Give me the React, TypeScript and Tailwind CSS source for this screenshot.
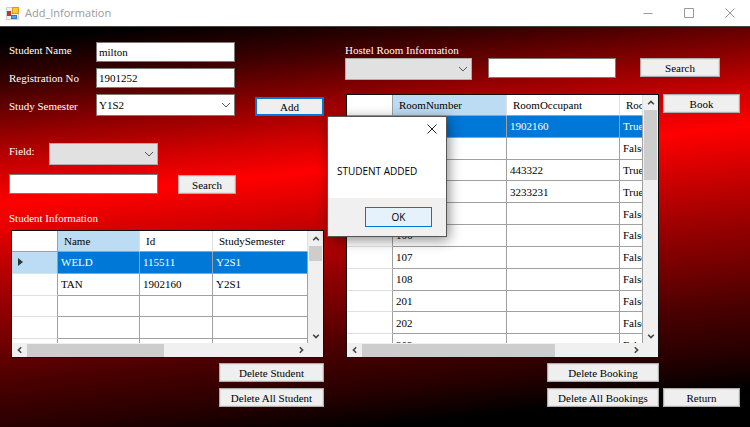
import type { ReactNode } from "react";

const serif = "font-['Liberation_Serif','Times_New_Roman',serif]";
const sans = "font-['Open_Sans','Noto_Sans',sans-serif]";

function Chevron({ dir, className = "" }: { dir: "up" | "down" | "left" | "right"; className?: string }) {
  const d = {
    up: "M1.5 6.5 5 3l3.5 3.5",
    down: "M1.5 3.5 5 7l3.5-3.5",
    left: "M6.5 1.5 3 5l3.5 3.5",
    right: "M3.5 1.5 7 5 3.5 8.5",
  }[dir];
  return (
    <svg viewBox="0 0 10 10" className={`size-2 shrink-0 ${className}`} fill="none" stroke="currentColor" strokeWidth="2" aria-hidden="true">
      <path d={d} />
    </svg>
  );
}

function Button({ children, className = "", primary = false }: { children: ReactNode; className?: string; primary?: boolean }) {
  return (
    <button
      type="button"
      className={`flex h-[19px] items-center justify-center border bg-[#efefef] text-black ring-1 ring-inset ${primary ? "border-[#0078d7] ring-[#0078d7]" : "border-[#adadad] ring-[#e1e1e1]"} ${className}`}
    >
      {children}
    </button>
  );
}

function TextBox({ id, value, label, className = "" }: { id: string; value?: string; label?: string; className?: string }) {
  return (
    <input
      id={id}
      type="text"
      defaultValue={value}
      aria-label={label}
      className={`h-5 min-w-0 border border-[#7a7a7a] bg-white px-0.5 text-black ${className}`}
    />
  );
}

function Combo({ id, value = "", label, className = "" }: { id: string; value?: string; label?: string; className?: string }) {
  return (
    <div className={`relative flex ${className}`}>
      <select
        id={id}
        aria-label={label}
        defaultValue={value}
        className={`h-[22px] w-full appearance-none border px-0.5 text-black ${value ? "border-[#7a7a7a] bg-white" : "border-[#adadad] bg-[#e1e1e1]"}`}
      >
        <option value={value}>{value}</option>
      </select>
      <svg viewBox="0 0 10 6" className="pointer-events-none absolute top-2 right-1 h-1.5 w-2.5 text-[#555]" fill="none" stroke="currentColor" aria-hidden="true">
        <path d="M1 1l4 4 4-4" />
      </svg>
    </div>
  );
}

type GridProps = {
  label: string;
  columns: { name: string; width: string }[];
  rows: string[][];
  current?: boolean;
  bodyHeight: string;
  tableHeight: string;
  vThumb: string;
  hThumb: string;
};

function DataGrid({ label, columns, rows, current, bodyHeight, tableHeight, vThumb, hThumb }: GridProps) {
  return (
    <div className="ml-px border border-[#111] bg-[#f0f0f0] text-black">
      <div className={`flex ${bodyHeight}`}>
        <div className="min-w-0 flex-1 overflow-hidden bg-white">
          <table aria-label={label} className={`w-full table-fixed border-separate border-spacing-0 ${tableHeight}`}>
            <thead>
              <tr className="h-[21px]">
                <th className="w-[46px] border-r border-b border-[#a0a0a0] p-0" />
                {columns.map((c, i) => (
                  <th
                    key={c.name}
                    className={`${c.width} overflow-hidden border-r border-b border-b-[#a0a0a0] border-r-[#e0e0e0] py-0 pr-0 pl-1.5 text-left font-normal ${i === 0 ? "bg-[#bcdcf4]" : "bg-white"}`}
                  >
                    {c.name}
                  </th>
                ))}
              </tr>
            </thead>
            <tbody>
              {rows.map((r, i) => (
                <tr key={i} className={`h-[21px] ${i === 0 ? "bg-[#0078d7] text-white" : "bg-white"}`}>
                  <th className={`border-r border-b border-r-[#a0a0a0] border-b-[#e0e0e0] p-0 ${i === 0 ? "bg-[#bcdcf4]" : "bg-white"}`}>
                    {current && i === 0 && (
                      <svg viewBox="0 0 5 8" className="ml-1.5 h-2 w-[5px] text-[#333]" fill="currentColor" aria-hidden="true">
                        <path d="M0 0l5 4-5 4z" />
                      </svg>
                    )}
                  </th>
                  {r.map((v, j) => (
                    <td key={j} className="overflow-hidden border-r border-b border-[#a0a0a0] py-0 pr-0 pl-[3px] leading-4 whitespace-nowrap">
                      {v}
                    </td>
                  ))}
                </tr>
              ))}
            </tbody>
          </table>
        </div>
        <div className="flex w-[15px] flex-col items-center text-[#444]">
          <div className="flex h-[15px] items-center"><Chevron dir="up" /></div>
          <div className={`w-[13px] bg-[#cdcdcd] ${vThumb}`} />
          <div className="mt-auto flex h-[15px] items-center"><Chevron dir="down" /></div>
        </div>
      </div>
      <div className="flex h-3.5 items-center pr-[15px] text-[#444]">
        <div className="flex w-[15px] justify-center"><Chevron dir="left" /></div>
        <div className={`h-[13px] bg-[#cdcdcd] ${hThumb}`} />
        <div className="ml-auto flex w-[15px] justify-center"><Chevron dir="right" /></div>
      </div>
    </div>
  );
}

const students = [
  ["WELD", "115511", "Y2S1"],
  ["TAN", "1902160", "Y2S1"],
  ["", "", ""],
  ["", "", ""],
  ["", "", ""],
];

const rooms = [
  ["101", "1902160", "True"],
  ["102", "", "False"],
  ["103", "443322", "True"],
  ["104", "3233231", "True"],
  ["105", "", "False"],
  ["106", "", "False"],
  ["107", "", "False"],
  ["108", "", "False"],
  ["201", "", "False"],
  ["202", "", "False"],
  ["203", "", "False"],
];

function TitleBar() {
  return (
    <header className={`flex h-[26px] shrink-0 items-center bg-white text-[#999] ${sans}`}>
      <svg viewBox="0 0 13 13" className="ml-1.5 size-[13px]" aria-hidden="true">
        <rect x="0.5" y="0.5" width="12" height="12" fill="#f0f0f0" stroke="#d0d0d0" />
        <rect x="1" y="4" width="4" height="5" fill="#c3342b" />
        <rect x="6.5" y="0.5" width="6" height="6" fill="#f7c93c" stroke="#d99a17" />
        <rect x="5.5" y="8.5" width="5" height="3" fill="#5aa0f0" stroke="#2f74d0" />
      </svg>
      <h1 className="ml-1.5 text-[11px]">Add_Information</h1>
      <div className="ml-auto flex">
        <button type="button" aria-label="Minimize" className="flex h-6 w-[41px] items-center justify-center">
          <svg viewBox="0 0 10 10" className="size-2.5" stroke="currentColor" fill="none"><path d="M0.5 5.5h9" /></svg>
        </button>
        <button type="button" aria-label="Maximize" className="flex h-6 w-[41px] items-center justify-center">
          <svg viewBox="0 0 10 10" className="size-2.5" stroke="currentColor" fill="none"><path d="M0.5 0.5h9v9h-9z" /></svg>
        </button>
        <button type="button" aria-label="Close" className="flex h-6 w-[41px] items-center justify-center">
          <svg viewBox="0 0 10 10" className="size-2.5" stroke="currentColor" fill="none"><path d="M0.5 0.5l9 9M9.5 0.5l-9 9" /></svg>
        </button>
      </div>
    </header>
  );
}

function MessageBox() {
  return (
    <div
      role="dialog"
      aria-label="Message"
      className={`absolute top-[116px] left-[327px] flex h-[121px] w-[120px] flex-col border border-[#555] bg-white text-[10px] text-black shadow-[2px_3px_12px_rgba(0,0,0,0.45)] ${sans}`}
    >
      <button type="button" aria-label="Close message" className="flex h-6 w-7 items-center justify-center self-end">
        <svg viewBox="0 0 10 10" className="size-2.5" stroke="#222" fill="none"><path d="M0.5 0.5l9 9M9.5 0.5l-9 9" /></svg>
      </button>
      <p className="flex flex-1 items-center pt-0.5 pl-[9px] whitespace-nowrap">STUDENT ADDED</p>
      <div className="flex h-[38px] items-center justify-end bg-[#f0f0f0] pr-3.5">
        <button type="button" className="h-5 w-[67px] border border-[#0078d7] bg-[#e5f1fb]">OK</button>
      </div>
    </div>
  );
}

export default function App() {
  return (
    <div className={`relative flex min-h-screen flex-col text-[11px] leading-4 ${serif}`}>
      <TitleBar />
      <main className="flex flex-1 border-t border-[#444] bg-[linear-gradient(174deg,#000_0%,#000_3%,#3c0000_12%,#900000_22%,#d00000_30%,#f00_37%,#a80000_54%,#480000_75%,#280000_84%,#000_92%)] pt-[15px] pr-2.5 pb-5 pl-[9px] text-white">
        <section className="flex flex-[315] flex-col">
          <div className="flex items-end">
            <div className="grid w-[226px] grid-cols-[87px_1fr] gap-y-1.5">
              <label htmlFor="name">Student Name</label>
              <TextBox id="name" value="milton" />
              <label htmlFor="reg" className="pt-0.5">Registration No</label>
              <TextBox id="reg" value="1901252" />
              <label htmlFor="semester" className="pt-1">Study Semester</label>
              <Combo id="semester" value="Y1S2" />
            </div>
            <Button primary className="ml-auto w-[69px]">Add</Button>
          </div>
          <div className="mt-[27px] flex">
            <label htmlFor="field" className="w-10">Field:</label>
            <Combo id="field" className="w-[109px]" />
          </div>
          <div className="mt-[9px] flex items-end">
            <TextBox id="student-query" label="Search students" className="w-[149px]" />
            <Button className="ml-5 w-[58px]">Search</Button>
          </div>
          <h2 className="mt-4 mb-1">Student Information</h2>
          <div className="pl-px">
            <DataGrid
              label="Student Information"
              columns={[{ name: "Name", width: "w-[82px]" }, { name: "Id", width: "w-[73px]" }, { name: "StudySemester", width: "w-auto" }]}
              rows={students}
              current
              bodyHeight="h-[112px]"
              tableHeight="h-[130px]"
              vThumb="h-[15px]"
              hThumb="w-[137px]"
            />
          </div>
          <div className="mt-[5px] flex flex-col items-end gap-1.5">
            <Button className="w-[105px]">Delete Student</Button>
            <Button className="w-[105px]">Delete All Student</Button>
          </div>
        </section>
        <section className="ml-[21px] flex flex-[395] flex-col">
          <h2>Hostel Room Information</h2>
          <div className="flex items-start">
            <Combo id="room-field" label="Room search field" className="w-[127px]" />
            <TextBox id="room-query" label="Search rooms" className="ml-4 w-32" />
            <Button className="ml-6 w-20">Search</Button>
          </div>
          <div className="mt-3.5 flex">
            <div className="min-w-0 flex-1">
              <DataGrid
                label="Hostel Room Information"
                columns={[{ name: "RoomNumber", width: "w-[114px]" }, { name: "RoomOccupant", width: "w-[113px]" }, { name: "RoomStatus", width: "w-auto" }]}
                rows={rooms}
                bodyHeight="h-[248px]"
                tableHeight="h-[261px]"
                vThumb="h-[70px]"
                hThumb="w-[193px]"
              />
            </div>
            <Button className="ml-1 w-[77px]">Book</Button>
          </div>
          <div className="mt-[5px] grid grid-cols-[112px_77px] justify-end gap-x-1 gap-y-1.5">
            <Button className="col-start-1">Delete Booking</Button>
            <Button className="col-start-1">Delete All Bookings</Button>
            <Button>Return</Button>
          </div>
        </section>
      </main>
      <MessageBox />
    </div>
  );
}
